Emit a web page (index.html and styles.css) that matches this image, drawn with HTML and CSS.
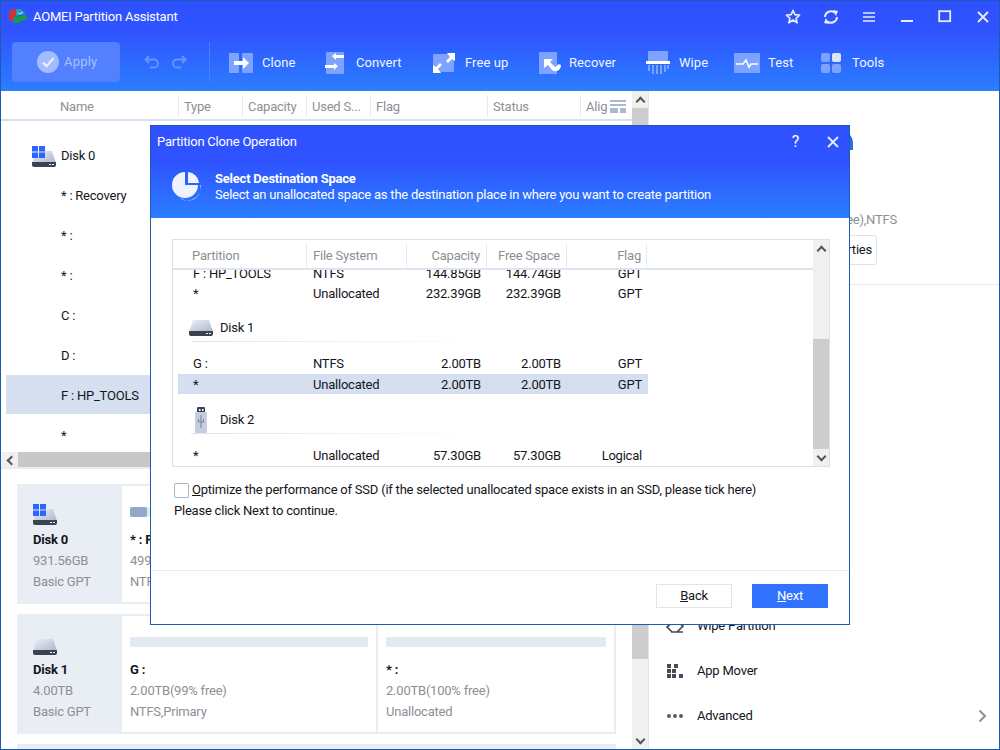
FILE: index.html
```html
<!DOCTYPE html>
<html lang="en">
<head>
<meta charset="utf-8">
<title>AOMEI Partition Assistant</title>
<link rel="stylesheet" href="styles.css">
</head>
<body>
<div class="app">
  <header class="top">
    <div class="titlebar">
      <svg class="logo" width="20" height="18" viewBox="0 0 20 18"><path d="M1 7C1 3 4 1 8 1l1 0 0 5-3 2-1 5-4-1z" fill="#d9302c"/><path d="M8 1h5l5 5-7 1-3 1z" fill="#1f9fb0"/><path d="M6 9l12-2 1 3-1 2-6 1-1 2-6 0z" fill="#1c9a46"/><path d="M10 5l2 1 3-2" stroke="#c9f5d0" fill="none"/></svg>
      <span class="apptitle">AOMEI Partition Assistant</span>
      <div class="winbtns">
        <svg width="16" height="16" viewBox="0 0 16 16"><path d="M8 1.500l1.900 4.200 4.600.5-3.400 3.100 1 4.500L8 11l-4.100 2.800 1-4.500L1.500 6.200l4.600-.5z" fill="none" stroke="#e6edff" stroke-width="1.700" stroke-linejoin="round"/></svg>
        <svg width="18" height="16" viewBox="0 0 18 16"><path d="M3 8a6 6 0 0 1 10-4.200M15 8A6 6 0 0 1 5 12.200" fill="none" stroke="#e6edff" stroke-width="2"/><path d="M11 1l5 1-2 5zM7 15l-5-1 2-5z" fill="#e6edff"/></svg>
        <svg width="14" height="12" viewBox="0 0 14 12"><path d="M1 2h12M1 6h12M1 10h12" stroke="#e6edff" stroke-width="1.700"/></svg>
        <svg width="14" height="14" viewBox="0 0 14 14"><path d="M1 11h12" stroke="#e6edff" stroke-width="2"/></svg>
        <svg width="14" height="14" viewBox="0 0 14 14"><rect x="1.200" y="1.200" width="11" height="10" fill="none" stroke="#e6edff" stroke-width="1.800"/></svg>
        <svg width="14" height="14" viewBox="0 0 14 14"><path d="M2 2l10 10M12 2L2 12" stroke="#e6edff" stroke-width="1.800"/></svg>
      </div>
    </div>
    <div class="toolbar">
      <button class="apply"><svg width="22" height="22" viewBox="0 0 24 24"><circle cx="12" cy="12" r="12" fill="#a3bbff"/><path d="M6.500 12.500l4 4 7.500-8.500" fill="none" stroke="#e8eeff" stroke-width="2.400"/></svg><span>Apply</span></button>
      <div class="undo">
        <svg width="16" height="14" viewBox="0 0 16 14"><path d="M5 1L1.500 4.500 5 8M2 4.500h8a4 4 0 0 1 0 8H6" fill="none" stroke="#6b94ff" stroke-width="1.800"/></svg>
        <svg width="16" height="14" viewBox="0 0 16 14"><path d="M11 1l3.500 3.500L11 8M14 4.500H6a4 4 0 0 0 0 8h4" fill="none" stroke="#6b94ff" stroke-width="1.800"/></svg>
      </div>
      <div class="tools">
        <div class="tool t-clone"><svg width="24" height="20" viewBox="0 0 24 20"><rect width="10" height="20" rx="1" fill="#7ea2ff"/><rect x="13" width="11" height="20" rx="1" fill="#7ea2ff"/><path d="M5 8h9V4l6 6-6 6v-4H5z" fill="#fff"/></svg><span>Clone</span></div>
        <div class="tool t-convert"><svg width="20" height="22" viewBox="0 0 20 22"><rect x="1" width="18" height="22" rx="1" fill="#7ea2ff"/><path d="M7 4l4-3v2h8v3h-8v2zM13 14l-4-3v2H0v3h9v2z" fill="#fff"/></svg><span>Convert</span></div>
        <div class="tool t-free"><svg width="22" height="20" viewBox="0 0 22 20"><rect y="1" width="21" height="18" rx="1" fill="#7ea2ff"/><path d="M22 0v8l-3-2-4 4-2-2 4-4-3-4zM0 20v-8l3 2 4-4 2 2-4 4 3 4z" fill="#fff"/></svg><span>Free up</span></div>
        <div class="tool t-recover"><svg width="22" height="22" viewBox="0 0 22 22"><rect width="18" height="22" rx="1" fill="#7ea2ff"/><path d="M5 8v-1l9 0-3 3 5 5c2-1 3-2 3-3l3 1c0 5-5 8-9 5l-4-5-4 3z" fill="#fff"/></svg><span>Recover</span></div>
        <div class="tool t-wipe"><svg width="24" height="24" viewBox="0 0 24 24"><rect x="2" width="20" height="10" rx="1" fill="#7ea2ff"/><rect y="10" width="24" height="3" fill="#fff"/><path d="M3 14v6M7 14v9M11 14v9M15 14v9M19 14v7M22 14v4" stroke="#7ea2ff" stroke-width="2"/></svg><span>Wipe</span></div>
        <div class="tool t-test"><svg width="26" height="20" viewBox="0 0 26 20"><rect width="26" height="20" rx="1" fill="#7ea2ff"/><path d="M2 11h7l3-4 3 7 2-3h7" fill="none" stroke="#fff" stroke-width="1.600"/></svg><span>Test</span></div>
        <div class="tool t-tools"><svg width="20" height="20" viewBox="0 0 20 20"><rect width="9" height="9" rx="2" fill="#7ea2ff"/><rect x="11" width="9" height="9" rx="2" fill="#dde6ff"/><rect y="11" width="9" height="9" rx="2" fill="#7ea2ff"/><rect x="11" y="11" width="9" height="9" rx="2" fill="#7ea2ff"/></svg><span>Tools</span></div>
      </div>
    </div>
  </header>

  <main class="main">
    <section class="left">
      <div class="upper">
        <div class="tablewrap">
          <div class="thead">
            <div class="th th-name">Name</div>
            <div class="th th-type">Type</div>
            <div class="th th-cap">Capacity</div>
            <div class="th th-used">Used S...</div>
            <div class="th th-flag">Flag</div>
            <div class="th th-status">Status</div>
            <div class="th th-align">Alig<svg class="cols" width="18" height="15" viewBox="0 0 18 15"><path d="M1 1h16v2H1zM1 5h16v2H1zM1 9h8v5H1zM11 9h6v5h-6z" fill="#a9bad0"/></svg></div>
          </div>
          <div class="tbody">
            <div class="trow disk-row">
              <svg class="hdd" width="24" height="21" viewBox="0 0 24 21"><use href="#hddwin"/></svg>
              <span>Disk 0</span>
            </div>
            <div class="trow">* : Recovery</div>
            <div class="trow">* :</div>
            <div class="trow">* :</div>
            <div class="trow">C :</div>
            <div class="trow">D :</div>
            <div class="trow sel">F : HP_TOOLS</div>
            <div class="trow">*</div>
          </div>
          <div class="hscroll"><span class="arrow left-arrow"></span><span class="hthumb"></span></div>
        </div>
        <div class="vscroll"><span class="arrow up"></span><span class="vthumb"></span></div>
      </div>
      <div class="lower">
        <div class="cards">
          <div class="card">
            <div class="diskcell">
              <svg class="hdd" width="24" height="21" viewBox="0 0 24 21"><use href="#hddwin"/></svg>
              <b>Disk 0</b><span>931.56GB</span><span>Basic GPT</span>
            </div>
            <div class="part">
              <div class="bar"><i class="used"></i></div>
              <b>* : Recovery</b><span>499.00MB(20% free)</span><span>NTFS,Primary</span>
            </div>
          </div>
          <div class="card">
            <div class="diskcell">
              <svg class="hdd" width="24" height="21" viewBox="0 0 24 21"><use href="#hddplain"/></svg>
              <b>Disk 1</b><span>4.00TB</span><span>Basic GPT</span>
            </div>
            <div class="part first">
              <div class="bar"></div>
              <b>G :</b><span>2.00TB(99% free)</span><span>NTFS,Primary</span>
            </div>
            <div class="part second">
              <div class="bar"></div>
              <b>* :</b><span>2.00TB(100% free)</span><span>Unallocated</span>
            </div>
          </div>
          <div class="card"></div>
        </div>
        <div class="vscroll low"><span class="vthumb2"></span><span class="arrow down"></span></div>
      </div>
    </section>

    <aside class="right">
      <div class="rinfo">
        <svg class="rpie" width="20" height="15" viewBox="0 0 20 15"><path d="M0 0H17Q20 3 20 7V15H0Z" fill="#2a6fe8"/></svg>
        <div class="rname">F : HP_TOOLS...</div>
        <div class="rsub">144.85GB(99% free),NTFS</div>
        <button class="rbtn">Properties</button>
      </div>
      <ul class="rlist">
        <li><svg width="18" height="16" viewBox="0 0 18 16"><path d="M6 14L1 9l8-7 8 6-6 6zM5 14h12" fill="none" stroke="#444a57" stroke-width="1.700"/></svg>Wipe Partition</li>
        <li><svg width="18" height="16" viewBox="0 0 18 16" fill="#444a57"><rect x="1" y="1" width="4" height="4"/><rect x="8" y="1" width="4" height="4"/><rect x="1" y="6" width="4" height="4"/><rect x="6" y="6" width="4" height="4"/><rect x="1" y="11" width="4" height="4"/><rect x="6" y="11" width="4" height="4"/><rect x="13" y="11" width="4" height="4"/></svg>App Mover</li>
        <li><svg width="18" height="16" viewBox="0 0 18 16" fill="#555b68"><circle cx="3" cy="8" r="2"/><circle cx="9" cy="8" r="2"/><circle cx="15" cy="8" r="2"/></svg>Advanced<svg class="chev" width="9" height="14" viewBox="0 0 9 14"><path d="M1.500 1.500L7 7l-5.500 5.500" fill="none" stroke="#8a8f99" stroke-width="2"/></svg></li>
      </ul>
    </aside>
  </main>

  <div class="dialog">
    <div class="dhead">
      <div class="dtitle">
        <span>Partition Clone Operation</span>
        <div class="dbtns">
          <span class="help">?</span>
          <svg width="14" height="14" viewBox="0 0 14 14"><path d="M2 2l10 10M12 2L2 12" stroke="#e6edff" stroke-width="1.800"/></svg>
        </div>
      </div>
      <div class="dbanner">
        <svg width="32" height="32" viewBox="0 0 32 32"><path d="M14 2v13h13A13 13 0 1 1 14 2z" fill="#eef3ff"/><path d="M17 2a12 12 0 0 1 11 11H17z" fill="#eef3ff"/><path d="M10 29a14 14 0 0 0 20-14l-1 0a12 12 0 0 1-19 13z" fill="#a9c4ff"/></svg>
        <div class="dbtext">
          <b>Select Destination Space</b>
          <span>Select an unallocated space as the destination place in where you want to create partition</span>
        </div>
      </div>
    </div>
    <div class="dbody">
      <div class="dtable">
        <div class="dmain">
          <div class="dthead">
            <div class="c1">Partition</div><div class="c2">File System</div><div class="c3">Capacity</div><div class="c4">Free Space</div><div class="c5">Flag</div>
          </div>
          <div class="dlist">
            <div class="dlist-inner">
              <div class="drow"><div class="c1">F : HP_TOOLS</div><div class="c2">NTFS</div><div class="c3">144.85GB</div><div class="c4">144.74GB</div><div class="c5">GPT</div></div>
              <div class="drow"><div class="c1">*</div><div class="c2">Unallocated</div><div class="c3">232.39GB</div><div class="c4">232.39GB</div><div class="c5">GPT</div></div>
              <div class="dgroup"><svg width="24" height="16" viewBox="0 0 24 16"><use href="#hddplain" transform="translate(0 -5)"/></svg><span>Disk 1</span></div>
              <div class="drow"><div class="c1">G :</div><div class="c2">NTFS</div><div class="c3">2.00TB</div><div class="c4">2.00TB</div><div class="c5">GPT</div></div>
              <div class="drow dsel"><div class="c1">*</div><div class="c2">Unallocated</div><div class="c3">2.00TB</div><div class="c4">2.00TB</div><div class="c5">GPT</div></div>
              <div class="dgroup g2"><svg width="24" height="26" viewBox="0 0 24 26"><rect x="8" y="0" width="8" height="6" rx="1" fill="#3c4352"/><rect x="10" y="2" width="1.500" height="2" fill="#fff"/><rect x="13" y="2" width="1.500" height="2" fill="#fff"/><rect x="6" y="5" width="12" height="21" rx="1" fill="#c4cede"/><path d="M12 8v13M9.500 12v3h5v-3" fill="none" stroke="#7e8ba1" stroke-width="1.200"/></svg><span>Disk 2</span></div>
              <div class="drow"><div class="c1">*</div><div class="c2">Unallocated</div><div class="c3">57.30GB</div><div class="c4">57.30GB</div><div class="c5">Logical</div></div>
            </div>
          </div>
        </div>
        <div class="dscroll"><span class="arrow up"></span><span class="dthumb"></span><span class="arrow down"></span></div>
      </div>
      <label class="check"><span class="box"></span><span><u>O</u>ptimize the performance of SSD (if the selected unallocated space exists in an SSD, please tick here)</span></label>
      <p class="hint">Please click Next to continue.</p>
    </div>
    <div class="dfoot">
      <button class="btn"><u>B</u>ack</button>
      <button class="btn primary"><u>N</u>ext</button>
    </div>
  </div>
</div>

<svg class="defs" width="0" height="0">
  <defs>
    <linearGradient id="hg" x1="0" y1="0" x2="1" y2="1"><stop offset="0" stop-color="#eef1f7"/><stop offset="1" stop-color="#a9b5cc"/></linearGradient>
    <g id="hddplain">
      <path d="M4 5h16l4 12H0z" fill="url(#hg)"/>
      <path d="M0 16h24v3a2 2 0 0 1-2 2H2a2 2 0 0 1-2-2z" fill="#3b4250"/>
      <rect x="17" y="18" width="2" height="1" fill="#fff"/><rect x="20" y="18" width="2" height="1" fill="#fff"/>
    </g>
    <g id="hddwin">
      <use href="#hddplain"/>
      <path d="M0 0h6v5.500H0zM7 0h6v5.500H7zM0 6.500h6V12H0zM7 6.500h6V12H7z" fill="#2a66ff"/>
    </g>
  </defs>
</svg>
</body>
</html>
```
FILE: styles.css
```css
* { box-sizing: border-box; }
html, body { margin: 0; padding: 0; }
body {
  width: 1000px; height: 750px; overflow: hidden;
  font: 13px/16px Roboto, "Liberation Sans", sans-serif;
  letter-spacing: -0.22px;
  color: #14161c;
  background: #fff;
}
button { font: inherit; letter-spacing: inherit; }
.defs { position: absolute; }
.app {
  position: relative; width: 1000px; height: 750px;
  border: 1px solid #1b5cb3;
  display: flex; flex-direction: column; overflow: hidden;
}
.top {
  height: 90px; flex: none; color: #fff;
  background: linear-gradient(#2f50ff 0%, #2f54ff 35%, #2b7eff 100%);
}
.titlebar { height: 31px; display: flex; align-items: center; padding: 0 0 0 7px; }
.logo { margin-right: 5px; margin-top: 0; }
.winbtns { margin-left: auto; width: 222px; display: flex; align-items: center; }
.winbtns svg { flex: none; }
.winbtns svg:nth-child(1) { margin-left: 8px; }
.winbtns svg:nth-child(2) { margin-left: 21px; }
.winbtns svg:nth-child(3) { margin-left: 22px; }
.winbtns svg:nth-child(4) { margin-left: 24px; }
.winbtns svg:nth-child(5) { margin-left: 24px; }
.winbtns svg:nth-child(6) { margin-left: 24px; }

.toolbar { display: flex; align-items: flex-start; padding-left: 11px; height: 59px; }
.apply {
  width: 108px; height: 40px; margin-top: 10px; border: 0; border-radius: 4px;
  background: #5280ff; color: #a9c1ff; display: flex; align-items: center;
  padding: 0 0 0 25px; gap: 5px; letter-spacing: 0.2px;
}
.undo {
  display: flex; gap: 11px; width: 90px; padding: 13px 0 0 24px; height: 40px; margin-top: 10px;
  border-right: 1px solid #4f7dff;
}
.tools { display: flex; margin-left: 18px; padding-left: 1px; }
.tool { display: flex; align-items: center; height: 40px; margin-top: 11px; gap: 9px; color: #f2f6ff; letter-spacing: 0.08px; }
.t-clone { width: 96px; }
.t-convert { width: 108px; gap: 11px; }
.t-free { width: 106px; gap: 10px; }
.t-recover { width: 107px; gap: 8px; }
.t-wipe { width: 88px; gap: 9px; }
.t-test { width: 87px; gap: 8px; }
.t-tools { gap: 11px; }

.main { flex: 1; display: flex; min-height: 0; }
.left { width: 648px; flex: none; display: flex; flex-direction: column; border-right: 1px solid #dde5f5; }
.upper { height: 378px; flex: none; display: flex; border-bottom: 2px solid #e7ecf5; }
.tablewrap { width: 631px; display: flex; flex-direction: column; position: relative; }
.thead { height: 30px; display: flex; border-bottom: 2px solid #d8e0ee; color: #8d8f96; flex: none; }
.th { height: 22px; margin-top: 4px; padding: 4px 0 0 5px; line-height: 16px; border-left: 1px solid #e3e8f1; white-space: nowrap; overflow: hidden; position: relative; }
.th-name { width: 177px; border-left: 0; padding-left: 59px; }
.th-type { width: 64px; }
.th-cap { width: 64px; }
.th-used { width: 64px; }
.th-flag { width: 117px; }
.th-status { width: 93px; }
.th-align { flex: 1; overflow: visible; }
.cols { position: absolute; left: 28px; top: 4px; background: #fff; }
.tbody { flex: 1; padding-top: 14px; overflow: hidden; }
.trow { height: 40px; display: flex; align-items: center; padding: 2px 0 0 60px; }
.disk-row { padding-left: 31px; gap: 5px; }
.sel { background: #d5dfef; margin-left: 5px; padding-left: 55px; height: 39px; margin-bottom: 1px; }
.hscroll { height: 15px; flex: none; display: flex; background: #f0f0f0; }
.hthumb { flex: 1; background: #c8c8c8; }
.vscroll { width: 16px; flex: none; background: #f0f0f0; display: flex; flex-direction: column; position: relative; }
.vthumb { flex: 1; background: #cdcdcd; }
.arrow { height: 17px; flex: none; position: relative; display: block; }
.arrow::before {
  content: ""; position: absolute; left: 5px; top: 7px; width: 5px; height: 5px;
  border-left: 2px solid #555; border-top: 2px solid #555; transform: rotate(45deg);
}
.arrow.down::before { transform: rotate(225deg); top: 4px; }
.left-arrow { width: 17px; height: 15px; }
.left-arrow::before { transform: rotate(-45deg); left: 7px; top: 5px; }

.lower { flex: 1; display: flex; min-height: 0; }
.cards { width: 631px; padding: 15px 16px 0 16px; display: flex; flex-direction: column; gap: 10px; overflow: hidden; }
.card { flex: none; height: 120px; background: #e9edf4; display: flex; padding: 2px 2px 2px 0; }
.diskcell { width: 105px; flex: none; padding: 18px 0 0 16px; display: flex; flex-direction: column; color: #8d8f96; line-height: 21px; }
.diskcell .hdd { margin-bottom: 4px; }
.diskcell b { color: #14161c; }
.part { flex: 1; background: #fff; padding: 21px 8px 0 8px; display: flex; flex-direction: column; line-height: 21px; color: #8d8f96; min-width: 0; }
.part b { color: #14161c; }
.part.first { flex: none; width: 254px; margin-right: 2px; }
.bar { height: 10px; background: #e3e9f3; border-radius: 2px; margin-bottom: 12px; flex: none; }
.used { display: block; height: 10px; width: 17px; background: #8fa8cc; border-radius: 2px; }
.low { height: 100%; }
.vthumb2 { flex: none; height: 190px; background: #cdcdcd; margin-bottom: auto; }

.right { flex: 1; display: flex; flex-direction: column; min-width: 0; }
.rinfo { height: 194px; flex: none; display: flex; flex-direction: column; align-items: flex-end; border-bottom: 1px solid #e5e9f2; padding-top: 44px; }
.rpie { margin-right: 146px; flex: none; margin-bottom: 38px; }
.rname, .rsub { line-height: 21px; white-space: nowrap; }
.rname { font-weight: bold; margin-right: 149px; }
.rsub { color: #8d8f96; margin-right: 102px; }
.rbtn { margin: 5px 122px 0 0; width: 110px; height: 30px; text-align: right; padding: 0 4px 0 0; background: #fff; border: 1px solid #dde3ee; border-radius: 3px; color: #14161c; }
.rlist { list-style: none; margin: auto 0 0; padding: 0 0 11px 17px; }
.rlist li { height: 45px; display: flex; align-items: center; gap: 13px; position: relative; }
.chev { position: absolute; left: 312px; top: 16px; }

.dialog {
  position: absolute; left: 149px; top: 124px; width: 700px; height: 500px;
  background: #fff; border: 1px solid #1b5cb3; display: flex; flex-direction: column;
}
.dhead { height: 92px; flex: none; color: #fff; background: linear-gradient(#2f50ff 0%, #2f54ff 40%, #2b7eff 100%); }
.dtitle { height: 32px; display: flex; align-items: center; padding-left: 6px; justify-content: space-between; }
.dbtns { display: flex; align-items: center; gap: 27px; padding-right: 9px; }
.help { font-size: 16px; }
.dbanner { height: 60px; display: flex; align-items: flex-start; padding: 12px 0 0 20px; gap: 12px; }
.dbtext { display: flex; flex-direction: column; line-height: 16px; padding-top: 1px; }
.dbody { flex: 1; padding: 21px 19px 0 21px; }
.dtable { height: 228px; width: 658px; border: 1px solid #dbe1ec; display: flex; }
.dmain { width: 640px; flex: none; display: flex; flex-direction: column; }
.dthead { height: 30px; flex: none; display: flex; border-bottom: 2px solid #dfe5f0; color: #8d8f96; padding-top: 4px; }
.dthead > div { height: 23px; border-right: 1px solid #e3e8f1; line-height: 24px; }
.c1 { width: 134px; padding-left: 19px; flex: none; }
.c2 { width: 100px; padding-left: 6px; flex: none; }
.c3, .c4 { width: 80px; text-align: right; padding-right: 6px; flex: none; }
.c5 { width: 80px; text-align: right; padding-right: 5px; flex: none; }
.dlist { flex: 1; overflow: hidden; }
.dlist-inner { margin-top: -7px; margin-left: 5px; }
.drow { display: flex; height: 20px; align-items: center; width: 470px; padding-top: 2px; }
.drow .c1 { width: 129px; padding-left: 15px; }
.dsel { background: #d5dfef; margin-top: 1px; }
.dgroup { height: 50px; display: flex; align-items: center; gap: 7px; padding: 0 0 1px 11px; position: relative; }
.dgroup::after { content: ""; position: absolute; left: 13px; width: 300px; top: 38px; height: 1px; background: linear-gradient(90deg, #dfe4ee, #fff); }
.dgroup.g2 { height: 51px; padding-bottom: 0; }
.dgroup.g2::after { top: 39px; }
.dscroll { flex: 1; background: #f0f0f0; display: flex; flex-direction: column; }
.dthumb { height: 110px; background: #cdcdcd; margin-top: auto; }
.check { display: flex; align-items: center; gap: 3px; margin: 15px 0 0 2px; height: 16px; }
.box { width: 15px; height: 15px; border: 1px solid #a9b4c6; border-radius: 2px; flex: none; background: #fff; }
.hint { margin: 5px 0 0 2px; }
.dfoot { height: 54px; flex: none; border-top: 1px solid #e8ebf3; display: flex; justify-content: flex-end; gap: 20px; padding: 13px 21px 0 0; }
.btn { width: 76px; height: 24px; background: #fff; border: 1px solid #dfe5f0; color: #14161c; padding: 0; }
.btn.primary { background: #3173ff; border-color: #3173ff; color: #fff; }
```
